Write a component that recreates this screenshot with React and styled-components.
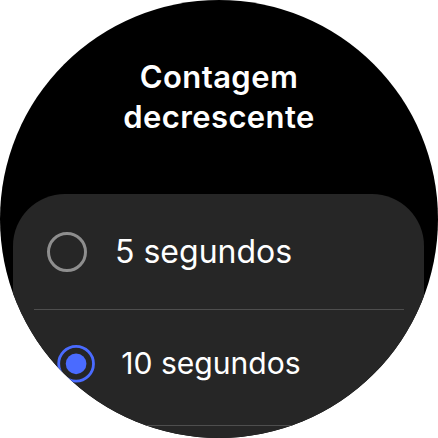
import styled, { createGlobalStyle } from "styled-components";

const accent = `#4a6bff`;

const GlobalStyle = createGlobalStyle`
  html, body {
    margin: 0;
    padding: 0;
    background: #ffffff;
  }
  body {
    font-family: "Inter", "Roboto", sans-serif;
  }
`;

const Screen = styled.div`
  width: 438px;
  height: 438px;
  border-radius: 50%;
  overflow: hidden;
  background: #000000;
  display: flex;
  flex-direction: column;
  align-items: stretch;
`;

const Title = styled.h1`
  margin: 57px 0 0 0;
  color: #ffffff;
  text-align: center;
  font-family: "Inter", sans-serif;
  font-size: 31px;
  font-weight: 600;
  letter-spacing: 0.4px;
  line-height: 40px;
`;

const Card = styled.div`
  margin: 57px 14px 0 13px;
  background: #262626;
  border-radius: 52px 52px 0 0;
  display: flex;
  flex-direction: column;
  flex: 1;
`;

const Row = styled.div`
  height: 115px;
  display: flex;
  align-items: center;
  flex-shrink: 0;
`;

const RowContent = styled.div`
  flex: 1;
  display: flex;
  align-items: center;
  gap: 28px;
  padding-left: 34px;
  transform-origin: 50% -50px;
  transform: scale(${(props) => props.$scale});
`;

const Radio = styled.div`
  width: 40px;
  height: 40px;
  box-sizing: border-box;
  border-radius: 50%;
  border: 3px solid ${(props) => (props.$checked ? accent : "#8e8e8e")};
  display: flex;
  align-items: center;
  justify-content: center;
  flex-shrink: 0;
`;

const Dot = styled.div`
  width: 22px;
  height: 22px;
  border-radius: 50%;
  background: ${accent};
`;

const Label = styled.span`
  color: #ffffff;
  font-size: 32px;
  font-weight: 400;
  line-height: 40px;
  white-space: nowrap;
`;

const Divider = styled.div`
  height: 1px;
  margin: 0 20px 0 21px;
  background: #4e4e4e;
  flex-shrink: 0;
`;

const options = [
  { label: "5 segundos", checked: false, scale: 1 },
  { label: "10 segundos", checked: true, scale: 0.94 },
];

export default function App() {
  return (
    <>
      <GlobalStyle />
      <Screen>
        <Title>
          Contagem
          <br />
          decrescente
        </Title>
        <Card>
          {options.map((opt) => (
            <div key={opt.label}>
              <Row>
                <RowContent $scale={opt.scale}>
                  <Radio $checked={opt.checked}>{opt.checked && <Dot />}</Radio>
                  <Label>{opt.label}</Label>
                </RowContent>
              </Row>
              <Divider />
            </div>
          ))}
        </Card>
      </Screen>
    </>
  );
}
